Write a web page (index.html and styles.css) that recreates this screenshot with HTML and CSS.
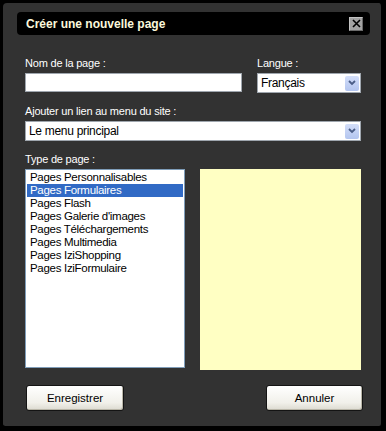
FILE: index.html
```html
<!DOCTYPE html>
<html lang="fr">
<head>
  <meta charset="UTF-8">
  <meta name="viewport" content="width=device-width, initial-scale=1.0">
  <title>Créer une nouvelle page</title>
  <link rel="stylesheet" href="styles.css">
</head>
<body>
  <div class="dialog">
    <div class="titlebar">
      <span class="title">Créer une nouvelle page</span>
      <button class="close" title="Fermer">
        <svg width="9" height="9" viewBox="0 0 9 9"><path d="M1 1L8 8M8 1L1 8" stroke="#000" stroke-width="1.6"/></svg>
      </button>
    </div>

    <div class="form">
      <div class="row">
        <div class="field field-name">
          <label>Nom de la page :</label>
          <input type="text" class="input">
        </div>
        <div class="field field-lang">
          <label>Langue :</label>
          <div class="select">
            <span>Français</span>
            <span class="arrow"><svg width="8" height="6" viewBox="0 0 8 6"><path d="M1 1L4 4L7 1" fill="none" stroke="#4a5d86" stroke-width="1.8"/></svg></span>
          </div>
        </div>
      </div>

      <div class="field">
        <label>Ajouter un lien au menu du site :</label>
        <div class="select">
          <span>Le menu principal</span>
          <span class="arrow"><svg width="8" height="6" viewBox="0 0 8 6"><path d="M1 1L4 4L7 1" fill="none" stroke="#4a5d86" stroke-width="1.8"/></svg></span>
        </div>
      </div>

      <div class="field">
        <label>Type de page :</label>
        <div class="types">
          <ul class="listbox">
            <li>Pages Personnalisables</li>
            <li class="selected">Pages Formulaires</li>
            <li>Pages Flash</li>
            <li>Pages Galerie d'images</li>
            <li>Pages Téléchargements</li>
            <li>Pages Multimedia</li>
            <li>Pages IziShopping</li>
            <li>Pages IziFormulaire</li>
          </ul>
          <div class="preview"></div>
        </div>
      </div>

      <div class="actions">
        <button class="btn btn-save">Enregistrer</button>
        <button class="btn btn-cancel">Annuler</button>
      </div>
    </div>
  </div>
</body>
</html>
```

FILE: styles.css
```css
body {
  margin: 0;
  background: #000;
  font-family: "Liberation Sans", Arial, sans-serif;
  font-size: 11px;
}

.dialog {
  box-sizing: border-box;
  width: 386px;
  height: 431px;
  background: #323232;
  border-style: solid;
  border-color: #000;
  border-width: 3px 5px 5px 3px;
  border-radius: 7px;
  padding: 9px 0 0 0;
}

.titlebar {
  display: flex;
  align-items: center;
  justify-content: space-between;
  height: 23px;
  margin: 0 11px 0 14px;
  padding: 0 7px 0 9px;
  background: #000;
  border-radius: 4px;
}

.title {
  color: #fbf8dc;
  font-weight: bold;
  font-size: 12px;
}

.close {
  display: flex;
  align-items: center;
  justify-content: center;
  width: 14px;
  height: 14px;
  padding: 0;
  background: #a3a3a3;
  border: 1px solid #c4c4c4;
  border-right-color: #6a6a6a;
  border-bottom-color: #6a6a6a;
}

.form {
  display: flex;
  flex-direction: column;
  gap: 12px;
  margin-top: 22px;
  padding: 0 20px 0 22px;
}

.row {
  display: flex;
  gap: 15px;
}

.field {
  display: flex;
  flex-direction: column;
}

.field-name {
  width: 217px;
}

.field-lang {
  width: 104px;
}

label {
  color: #fff;
  line-height: 13px;
  margin-bottom: 3px;
  letter-spacing: -0.2px;
}

.input {
  box-sizing: border-box;
  height: 19px;
  margin: 0;
  border: 1px solid #9fa6ae;
  background: #fff;
}

.select {
  box-sizing: border-box;
  display: flex;
  align-items: center;
  justify-content: space-between;
  height: 20px;
  padding: 0 1px 0 3px;
  background: #fff;
  border: 1px solid #9fa6ae;
  color: #000;
  font-size: 12px;
  letter-spacing: -0.3px;
}

.arrow {
  display: flex;
  align-items: center;
  justify-content: center;
  width: 14px;
  height: 15px;
  background: linear-gradient(#d3def9, #b3c5ef);
  border-radius: 2px;
}

.types {
  display: flex;
  gap: 15px;
  align-items: flex-start;
}

.listbox {
  box-sizing: border-box;
  width: 161px;
  height: 199px;
  margin: 0;
  padding: 1px 1px 0 1px;
  list-style: none;
  background: #fff;
  border: 1px solid #7f9db9;
}

.listbox li {
  height: 13px;
  line-height: 13px;
  padding-left: 3px;
  font-size: 11.5px;
  letter-spacing: -0.3px;
  color: #000;
}

.listbox li.selected {
  background: #316ac5;
  color: #fff;
}

.preview {
  width: 162px;
  height: 201px;
  background: #ffffc3;
}

.actions {
  display: flex;
  justify-content: space-between;
  margin: 3px -2px 0 0;
  padding: 0 0 0 1px;
}

.btn {
  height: 26px;
  font-family: "Liberation Sans", Arial, sans-serif;
  font-size: 11.5px;
  color: #000;
  background: linear-gradient(#ffffff, #f1f0ea 70%, #dcdad0);
  border: 1px solid #141414;
  border-radius: 3px;
  box-shadow: inset -1px -1px #b9b6a8;
  cursor: pointer;
}

.btn-save {
  width: 98px;
}

.btn-cancel {
  width: 97px;
}
```
